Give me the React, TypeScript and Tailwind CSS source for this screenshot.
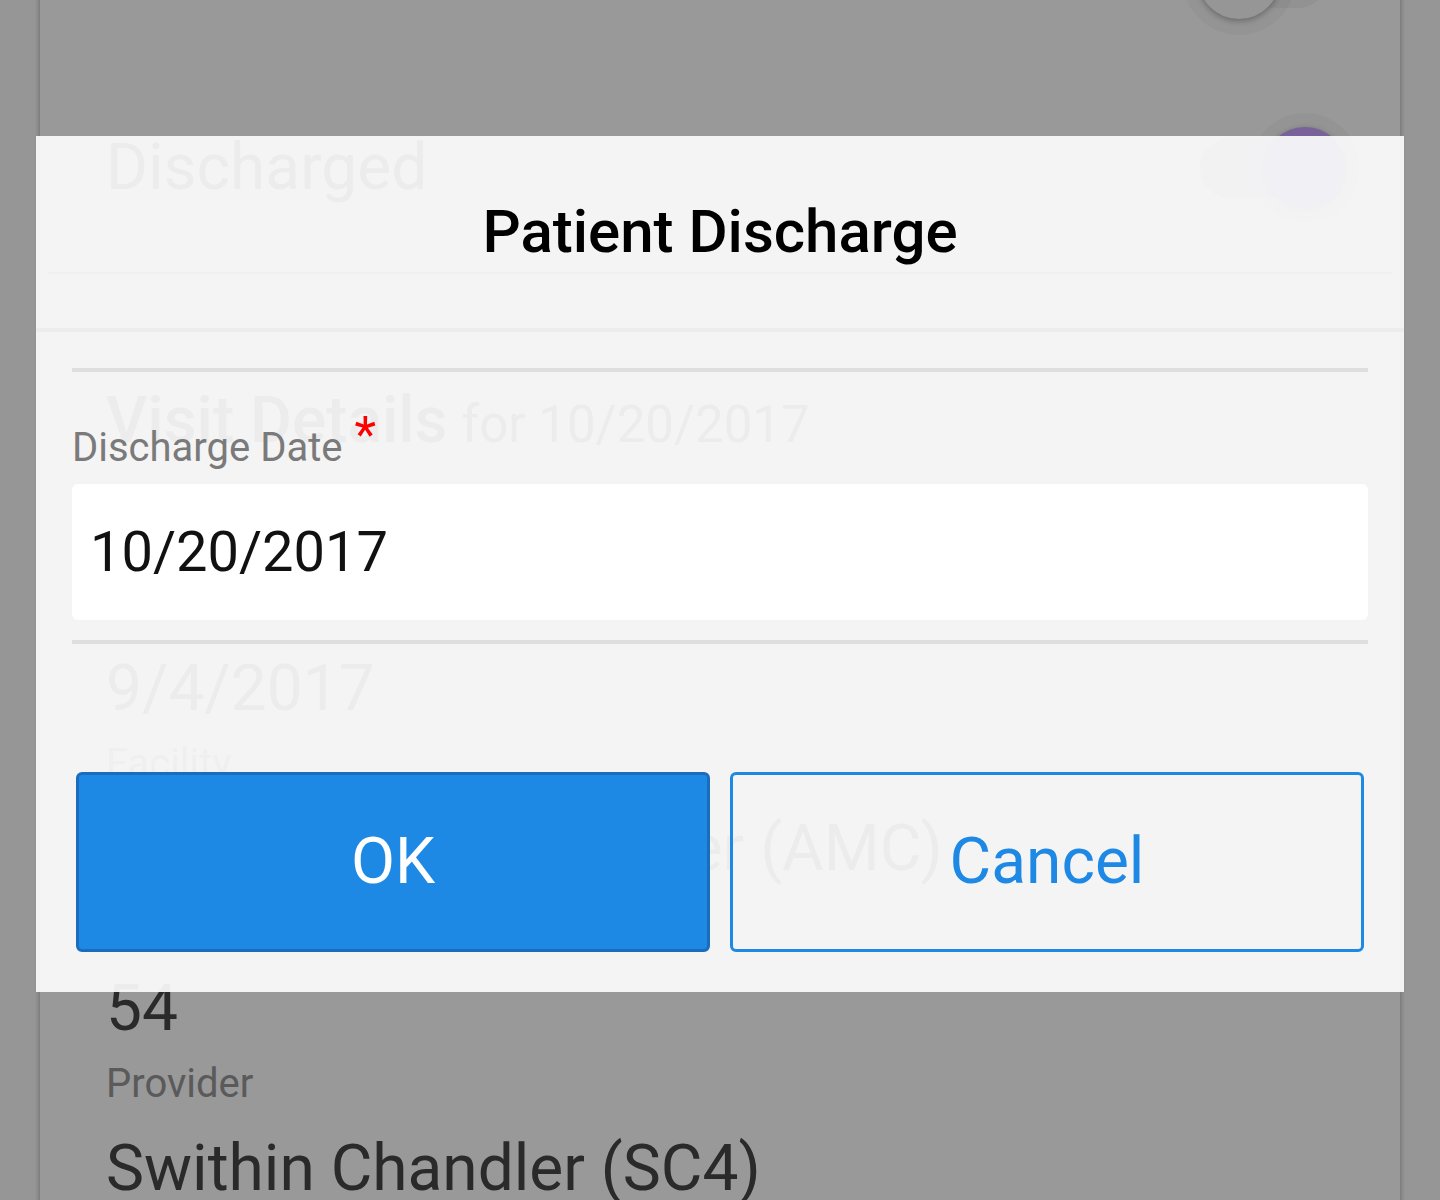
import React from "react"

interface Field {
  label: string
  value: string
}

const visitFields: Field[] = [
  { label: "Admission date", value: "9/4/2017" },
  { label: "Facility", value: "Albany Medical Center (AMC)" },
  { label: "Room number", value: "54" },
  { label: "Provider", value: "Swithin Chandler (SC4)" },
]

function Switch({ checked }: { checked: boolean }) {
  return (
    <div className="relative h-[82px] w-[146px] shrink-0">
      <div
        className={
          checked
            ? "absolute left-0 top-[11px] h-[60px] w-[130px] rounded-full bg-[#dccbf7]"
            : "absolute left-0 top-[11px] h-[60px] w-[130px] rounded-full bg-[#f4f4f4]"
        }
      />
      <div
        className={
          checked
            ? "absolute left-[64px] top-0 size-[82px] rounded-full bg-[#c9a3ff] shadow-[0_2px_6px_rgba(0,0,0,0.3),0_0_0_14px_rgba(0,0,0,0.03)]"
            : "absolute left-0 top-0 size-[82px] rounded-full bg-[#fafafa] shadow-[0_2px_6px_rgba(0,0,0,0.3),0_0_0_16px_rgba(0,0,0,0.03)]"
        }
      />
    </div>
  )
}

function PatientCard() {
  return (
    <div className="mx-10 -mt-[117px] min-h-[1400px] bg-white shadow-[0_0_6px_rgba(0,0,0,0.35)]">
      <div className="flex h-[190px] items-center justify-end pl-[66px] pr-[56px]">
        <Switch checked={false} />
      </div>
      <div className="flex h-[190px] items-center justify-between pl-[66px] pr-[54px]">
        <span className="text-[64px] leading-[76px] text-[#474747]">Discharged</span>
        <Switch checked={true} />
      </div>

      <div className="mx-2 mt-[9px] border-t-2 border-[#b0b0b0] px-[58px]">
        <h2 className="mt-[107px] flex h-[80px] items-baseline gap-[14px] text-[#474747]">
          <span className="text-[64px] font-medium leading-[80px]">Visit Details</span>
          <span className="text-[51px] leading-[80px]">for 10/20/2017</span>
        </h2>

        <div className="mt-[121px]">
          {visitFields.map((field) => (
            <div key={field.label} className="mb-[15px]">
              <div className="text-[40px] leading-[44px] text-[#969696]">{field.label}</div>
              <div className="mt-[25px] text-[64px] leading-[76px] text-[#474747]">{field.value}</div>
            </div>
          ))}
        </div>
      </div>
    </div>
  )
}

function DischargeDialog() {
  return (
    <div className="absolute left-9 top-[136px] w-[1368px] bg-[rgba(251,251,251,0.93)]">
      <div className="flex h-[196px] items-center justify-center border-b-4 border-[#ececec]">
        <h1 className="text-[60px] font-medium leading-[70px] text-black">Patient Discharge</h1>
      </div>

      <div className="px-9 pb-10 pt-9">
        <div className="h-1 bg-[#dedede]" />

        <label className="mt-[47px] block h-[44px] text-[40px] leading-[44px] text-[#7a7a7a]">
          Discharge Date
          <span className="relative -top-[9px] ml-3 text-[50px] leading-none text-[#ff0000]">*</span>
        </label>

        <div className="mt-[21px] flex h-[136px] items-center rounded-md bg-white/[0.97] px-[18px]">
          <span className="text-[56px] leading-[72px] text-[#111111]">10/20/2017</span>
        </div>

        <div className="mt-5 h-1 bg-[#dedede]" />

        <div className="mt-[128px] grid h-[180px] grid-cols-2 gap-5 px-1">
          <button className="flex items-center justify-center rounded-md border-[3px] border-[#1a6dbd] bg-[#1e88e5] text-[64px] text-white">
            OK
          </button>
          <button className="flex items-center justify-center rounded-md border-[3px] border-[#1e88e5] text-[64px] text-[#1e88e5]">
            Cancel
          </button>
        </div>
      </div>
    </div>
  )
}

export default function App() {
  return (
    <div className="relative h-[1200px] w-[1440px] overflow-hidden bg-[#fbfbfb] font-['Roboto',sans-serif]">
      <PatientCard />
      <div className="absolute inset-0 bg-black/40" />
      <DischargeDialog />
    </div>
  )
}
